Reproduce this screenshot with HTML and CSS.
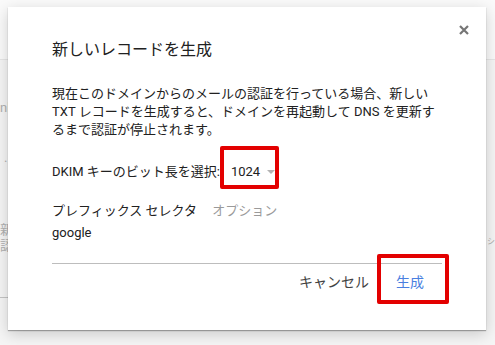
FILE: index.html
```html
<!DOCTYPE html>
<html lang="ja">

<head>
    <meta charset="UTF-8">
    <meta name="viewport" content="width=device-width, initial-scale=1.0">
    <title>新しいレコードを生成</title>
    <link rel="stylesheet" href="styles.css">
</head>

<body>
    <div class="page">
        <div class="page_header"></div>
        <div class="page_body">
            <p class="bg_row bg_row_first">nl</p>
            <p class="bg_row bg_row_dot">.</p>
            <p class="bg_row bg_row_jp">新<br>認</p>
            <p class="bg_row bg_row_right">シ</p>
            <div class="bg_line"></div>
        </div>
    </div>

    <div class="dialog">
        <button class="close_btn" aria-label="閉じる">
            <svg width="10" height="10" viewBox="0 0 10 10">
                <path d="M1 1 L9 9 M9 1 L1 9" stroke="#757575" stroke-width="2.2" fill="none" />
            </svg>
        </button>

        <h2 class="dialog_title">新しいレコードを生成</h2>

        <p class="dialog_text">現在このドメインからのメールの認証を行っている場合、新しい TXT レコードを生成すると、ドメインを再起動して DNS を更新するまで認証が停止されます。</p>

        <div class="key_row">
            <span>DKIM キーのビット長を選択:</span>
            <div class="select">
                <span class="select_value">1024</span>
                <span class="select_arrow"></span>
                <div class="mark mark_select"></div>
            </div>
        </div>

        <div class="prefix_label">
            <span>プレフィックス セレクタ</span>
            <span class="optional">オプション</span>
        </div>
        <div class="prefix_value">google</div>

        <div class="dialog_footer">
            <button class="btn btn_cancel">キャンセル</button>
            <div class="btn_wrap">
                <button class="btn btn_primary">生成</button>
                <div class="mark mark_btn"></div>
            </div>
        </div>
    </div>
</body>

</html>
```

FILE: styles.css
```css
* {
    margin: 0;
    padding: 0;
    box-sizing: border-box;
}

body {
    width: 495px;
    height: 345px;
    overflow: hidden;
    position: relative;
    background: #f5f5f5;
    font-family: Roboto, "Noto Sans CJK JP", sans-serif;
    color: #212121;
}

/* page behind the dialog */

.page_header {
    height: 60px;
    background: #fafafa;
    border-bottom: 1px solid #e6e6e6;
}

.page_body {
    position: relative;
    height: 284px;
}

.bg_row {
    position: absolute;
    font-size: 13px;
    line-height: 16px;
    color: #b0b0b0;
}

.bg_row_first {
    top: 40px;
    left: 0;
}

.bg_row_dot {
    top: 90px;
    left: 4px;
}

.bg_row_jp {
    top: 162px;
    left: 0;
}

.bg_row_right {
    top: 174px;
    left: 487px;
    font-size: 8px;
}

.bg_line {
    position: absolute;
    top: 237px;
    left: 0;
    width: 8px;
    height: 1px;
    background: #c4c4c4;
}

/* dialog */

.dialog {
    position: absolute;
    left: 8px;
    top: 7px;
    width: 478px;
    height: 323px;
    padding: 31px 44px 0 44px;
    background: #fff;
    box-shadow: 0 1px 1px rgba(0, 0, 0, 0.3), 0 4px 14px rgba(0, 0, 0, 0.18);
}

.close_btn {
    position: absolute;
    top: 18px;
    right: 17px;
    width: 10px;
    height: 10px;
    border: none;
    background: none;
    display: flex;
}

.dialog_title {
    font-size: 16px;
    font-weight: 400;
    line-height: 24px;
}

.dialog_text {
    margin-top: 23px;
    font-size: 13px;
    line-height: 18px;
    width: 386px;
}

.key_row {
    margin-top: 21px;
    display: flex;
    align-items: center;
    font-size: 13px;
    line-height: 24px;
}

.select {
    position: relative;
    display: flex;
    align-items: center;
    margin-left: 11px;
}

.select_value {
    font-size: 13px;
}

.select_arrow {
    margin-left: 7px;
    width: 0;
    height: 0;
    border-left: 4px solid transparent;
    border-right: 4px solid transparent;
    border-top: 4px solid #b3b3b3;
}

.prefix_label {
    margin-top: 18px;
    font-size: 13px;
    line-height: 18px;
}

.optional {
    margin-left: 12px;
    color: #9a9a9a;
}

.prefix_value {
    margin-top: 4px;
    font-size: 13px;
    line-height: 18px;
}

.dialog_footer {
    margin-top: 21px;
    border-top: 1px solid #bdbdbd;
    display: flex;
    justify-content: flex-end;
    gap: 3px;
    padding-right: 6px;
}

.btn {
    border: none;
    background: none;
    font-family: inherit;
    font-size: 14px;
    line-height: 20px;
    padding: 8px 12px;
    color: #424242;
}

.btn_primary {
    color: #4a7fe0;
}

.btn_wrap {
    position: relative;
}

/* red highlight marks */

.mark {
    position: absolute;
    border: 4px solid #e30000;
    border-radius: 2px;
}

.mark_select {
    left: -11px;
    top: -14px;
    width: 59px;
    height: 43px;
}

.mark_btn {
    left: -7px;
    top: -10px;
    width: 72px;
    height: 50px;
}
```
